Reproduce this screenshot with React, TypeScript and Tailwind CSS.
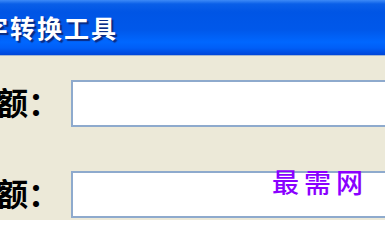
const cjk = "font-['Noto_Sans_CJK_SC',sans-serif]";

function Row({ label }: { label: string }) {
  return (
    <div className="flex items-center h-[47px]">
      <div className="w-[60px] shrink-0 flex justify-end overflow-hidden">
        <span
          className={`${cjk} whitespace-nowrap text-[32px] font-bold leading-none text-black -translate-y-[3px]`}
        >
          {label}
        </span>
      </div>
      <div className="ml-[11px] h-full w-[330px] shrink-0 border-2 border-[#8eaacd] bg-white" />
    </div>
  );
}

export default function App() {
  return (
    <div className="relative w-[385px] h-[220px] overflow-hidden bg-[#ECE9D8]">
      {/* title bar */}
      <div className="h-[55px] flex items-center overflow-hidden bg-[linear-gradient(to_bottom,#3d8af7_0px,#0a5fe8_4px,#0055e5_12px,#0058ea_30px,#0067ff_42px,#005ef7_48px,#0046d8_55px)]">
        <span
          className={`${cjk} ml-[-44px] whitespace-nowrap text-[25px] font-bold leading-none tracking-[2px] text-white [text-shadow:2px_2px_1px_#0a2a80]`}
        >
          数字转换工具
        </span>
      </div>
      <div className="h-px bg-[#a4b6d0]" />

      {/* form */}
      <div className="flex flex-col gap-[44px] pt-[24px]">
        <Row label="小写金额：" />
        <Row label="大写金额：" />
      </div>

      {/* watermark */}
      <span
        className={`${cjk} absolute left-[272px] top-[168px] text-[27px] font-medium leading-none tracking-[5px] text-[#8a00ff]`}
      >
        最需网
      </span>
    </div>
  );
}
